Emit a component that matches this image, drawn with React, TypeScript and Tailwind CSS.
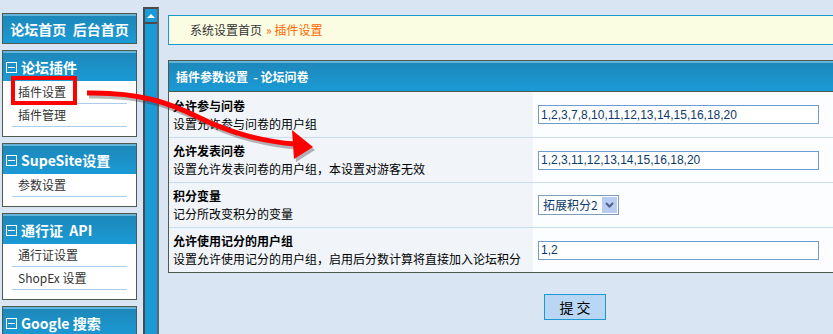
const cjk = 'font-["Noto_Sans_CJK_SC","Noto_Sans",sans-serif]'

const menus = [
  { title: '论坛插件', items: ['插件设置', '插件管理'] },
  { title: 'SupeSite设置', items: ['参数设置'] },
  { title: '通行证\u00a0\u00a0API', items: ['通行证设置', 'ShopEx 设置'] },
  { title: 'Google 搜索', items: [] as string[] },
]

const rows = [
  { title: '允许参与问卷', desc: '设置允许参与问卷的用户组', value: '1,2,3,7,8,10,11,12,13,14,15,16,18,20' },
  { title: '允许发表问卷', desc: '设置允许发表问卷的用户组，本设置对游客无效', value: '1,2,3,11,12,13,14,15,16,18,20' },
  { title: '积分变量', desc: '记分所改变积分的变量', select: '拓展积分2' },
  { title: '允许使用记分的用户组', desc: '设置允许使用记分的用户组，启用后分数计算将直接加入论坛积分', value: '1,2' },
]

function BoxHeader({ children }: { children: React.ReactNode }) {
  return (
    <div className="flex h-[30px] items-center gap-[4px] border-t-2 border-[#63b3da] bg-gradient-to-b from-[#1d88ba] to-[#1a9ad6] px-[3px] text-[14px] font-bold text-white">
      {children}
    </div>
  )
}

function Collapse() {
  return (
    <span className="flex h-[11px] w-[11px] items-center justify-center border border-white">
      <span className="h-px w-[7px] bg-white" />
    </span>
  )
}

function Sidebar() {
  return (
    <aside className="ml-[2px] mt-[13px] flex w-[135px] shrink-0 flex-col gap-[6px]">
      <div className="border border-[#4e5a4e] bg-white">
        <div className="flex h-[29px] items-center justify-center border-t-2 border-[#63b3da] bg-gradient-to-b from-[#1d88ba] to-[#1a9ad6] text-[14px] font-bold text-white">
          论坛首页&nbsp;&nbsp;后台首页
        </div>
      </div>
      {menus.map((menu) => (
        <div key={menu.title} className="border border-[#4e5a4e] bg-white">
          <BoxHeader>
            <Collapse />
            {menu.title}
          </BoxHeader>
          {menu.items.length > 0 && (
            <ul className="pb-[9px]">
              {menu.items.map((item) => (
                <li key={item} className="mx-[9px] flex h-[23px] items-center border-b border-[#a9cdea] pl-[6px] text-[12px] text-[#333]">
                  {item}
                </li>
              ))}
            </ul>
          )}
        </div>
      ))}
    </aside>
  )
}

function ScrollBar() {
  return (
    <div className="ml-[6px] mt-[7px] flex w-[16px] shrink-0 flex-col border-x-2 border-t-2 border-l-[#4a4a4a] border-r-[#5c6670] border-t-[#4a4a4a] bg-[#1a9ad6]">
      <div className="flex h-[15px] items-center justify-center border-b-2 border-[#4a4a4a]">
        <span className="h-0 w-0 border-x-[4px] border-b-[4px] border-x-transparent border-b-white" />
      </div>
    </div>
  )
}

function Main() {
  return (
    <main className="ml-[9px] mt-[15px] flex min-w-0 flex-1 flex-col">
      <div className="flex h-[30px] items-center border-y border-l border-[#1a9ad0] bg-[#fbfde3] pl-[21px] text-[12px] text-[#333]">
        系统设置首页
        <span className="ml-[4px] text-[#ff6600]">» 插件设置</span>
      </div>

      <div className="mt-[15px] border-y border-l border-[#4e5a4e]">
        <div className="flex h-[30px] items-center border-t-2 border-[#63b3da] bg-gradient-to-b from-[#1d88ba] to-[#1a9ad6] pl-[7px] text-[12px] font-bold text-white">
          插件参数设置&nbsp;&nbsp;- 论坛问卷
        </div>
        <div className="border-t border-[#4e5a4e]">
          {rows.map((row, i) => (
            <div key={row.title} className={`flex h-[45px] ${i > 0 ? 'border-t border-[#c4ddf0]' : ''}`}>
              <div className="flex w-[364px] shrink-0 flex-col justify-center bg-[#f1f5f9] pl-[4px] text-[12px] leading-[18px] text-black">
                <b>{row.title}</b>
                <span>{row.desc}</span>
              </div>
              <div className="flex flex-1 items-center bg-[#fcfdfe] pl-[5px]">
                {row.select ? (
                  <div className="flex h-[20px] w-[81px] items-center justify-between border border-[#7f9db9] bg-white pl-[4px] pr-[1px] text-[12px] text-[#0b3a6a]">
                    {row.select}
                    <span className="flex h-[16px] w-[15px] items-center justify-center bg-[#b9cdf4]">
                      <svg width="9" height="6" viewBox="0 0 9 6">
                        <path d="M1 1 L4.5 4.5 L8 1" fill="none" stroke="#4d6185" strokeWidth="2" />
                      </svg>
                    </span>
                  </div>
                ) : (
                  <div className="flex h-[19px] w-[281px] items-center border border-[#6e9bd0] bg-white pl-[2px] font-['Liberation_Sans',sans-serif] text-[12px] text-[#0b3a6a]">
                    {row.value}
                  </div>
                )}
              </div>
            </div>
          ))}
        </div>
      </div>

      <button className="ml-[376px] mt-[21px] flex h-[26px] w-[62px] items-center justify-center border border-[#1a9ad0] bg-[#b9d6f4] text-[14px] text-black">
        提&nbsp;交
      </button>
    </main>
  )
}

function Annotation() {
  const shaft = 'M87 93 C140 92 170 103 200 118 S265 142 295 144'
  const head = '292,130 313,147 294,159'
  return (
    <svg className="pointer-events-none absolute left-0 top-0" width="833" height="334">
      <rect x="13" y="78" width="62" height="25" fill="none" stroke="#ff0000" strokeWidth="4" />
      <g transform="translate(2 3)" opacity="0.35">
        <path d={shaft} fill="none" stroke="#333" strokeWidth="5" />
        <polygon points={head} fill="#333" />
      </g>
      <path d={shaft} fill="none" stroke="#ff0000" strokeWidth="5" />
      <polygon points={head} fill="#ff0000" />
    </svg>
  )
}

export default function App() {
  return (
    <div className={`relative flex h-[334px] w-[833px] overflow-hidden bg-[#d9e5f3] ${cjk}`}>
      <Sidebar />
      <ScrollBar />
      <Main />
      <Annotation />
    </div>
  )
}
